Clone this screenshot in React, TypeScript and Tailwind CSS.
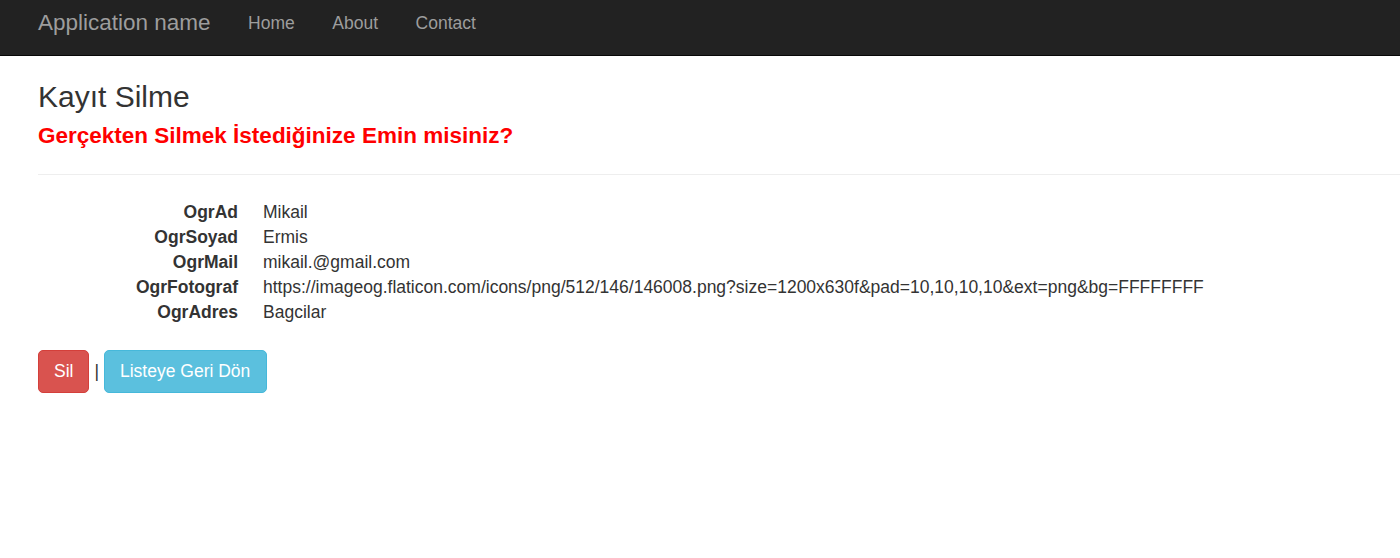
export default function App() {
  const rows: [string, string][] = [
    ["OgrAd", "Mikail"],
    ["OgrSoyad", "Ermis"],
    ["OgrMail", "mikail.@gmail.com"],
    ["OgrFotograf", "https://imageog.flaticon.com/icons/png/512/146/146008.png?size=1200x630f&pad=10,10,10,10&ext=png&bg=FFFFFFFF"],
    ["OgrAdres", "Bagcilar"],
  ];
  return (
    <div className="min-h-[558px] bg-white text-[#333] font-['Liberation_Sans',Arial,sans-serif] overflow-hidden">
      <nav className="h-[56px] bg-[#222] border-b border-[#080808] flex items-start pl-[38px]">
        <span className="text-[22.5px] leading-[46px] text-[#9d9d9d] pr-[18.75px]">Application name</span>
        <span className="text-[17.5px] leading-[46px] text-[#9d9d9d] px-[18.75px]">Home</span>
        <span className="text-[17.5px] leading-[46px] text-[#9d9d9d] px-[18.75px]">About</span>
        <span className="text-[17.5px] leading-[46px] text-[#9d9d9d] px-[18.75px]">Contact</span>
      </nav>
      <main className="pl-[38px]">
        <h2 className="text-[30px] leading-[33px] mt-[24px] font-normal">Kayıt Silme</h2>
        <h4 className="text-[22.5px] leading-[25px] mt-[10px] font-bold text-[#ff0000]">Gerçekten Silmek İstediğinize Emin misiniz?</h4>
        <hr className="mt-[26px] border-0 border-t border-[#eee]" />
        <dl className="grid grid-cols-[200px_1fr] gap-x-[25px] mt-[25px] text-[17.5px] leading-[25px]">
          {rows.map(([k, v]) => (
            <div key={k} className="contents">
              <dt className="text-right font-bold">{k}</dt>
              <dd className="whitespace-nowrap">{v}</dd>
            </div>
          ))}
        </dl>
        <div className="mt-[25px] flex items-center text-[17.5px]">
          <button className="h-[43px] px-[15px] bg-[#d9534f] border border-[#d43f3a] rounded-[5px] text-white leading-[25px]">Sil</button>
          <span className="mx-[5px] text-[#333]">|</span>
          <button className="h-[43px] pl-[15px] pr-[16px] bg-[#5bc0de] border border-[#46b8da] rounded-[5px] text-white leading-[25px]">Listeye Geri Dön</button>
        </div>
      </main>
    </div>
  );
}
